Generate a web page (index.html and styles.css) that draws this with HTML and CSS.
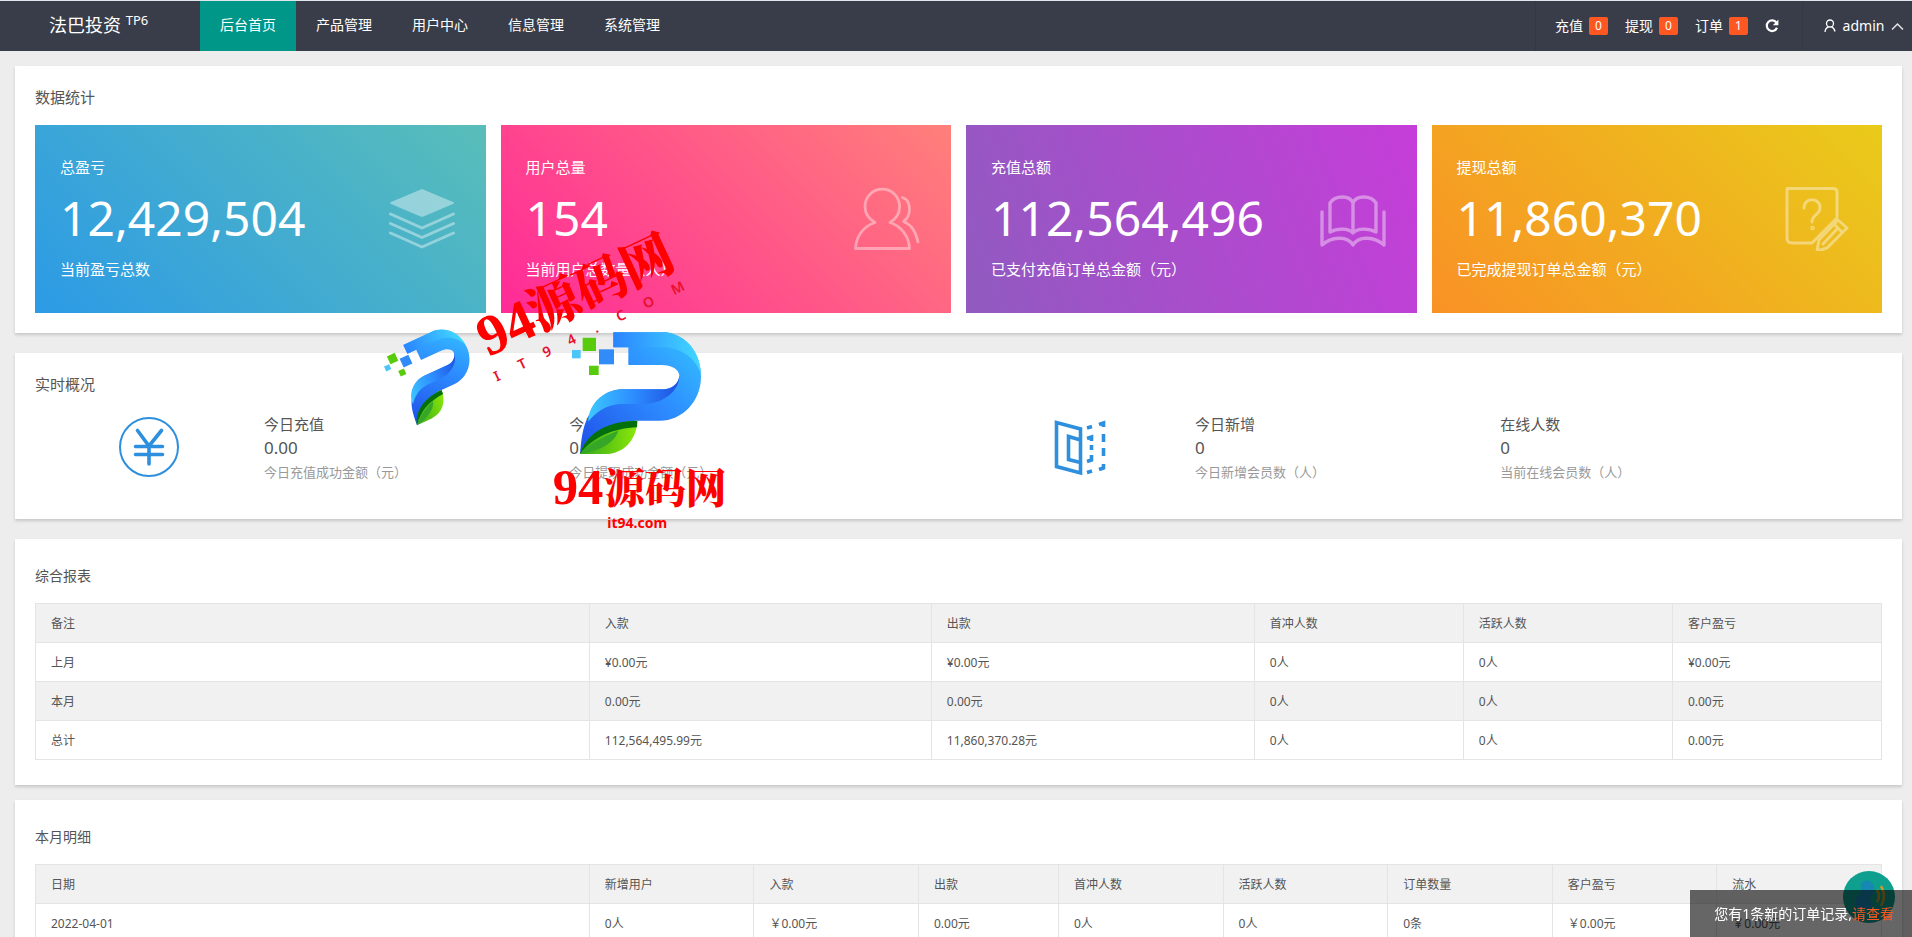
FILE: index.html
```html
<!DOCTYPE html>
<html lang="zh-CN">
<head>
<meta charset="utf-8">
<title>法巴投资 TP6</title>
<link rel="stylesheet" href="styles.css">
</head>
<body>
<header class="topbar">
  <a class="brand" href="#">法巴投资 <sup>TP6</sup></a>
  <nav class="nav">
    <a class="nav-item active" href="#">后台首页</a>
    <a class="nav-item" href="#">产品管理</a>
    <a class="nav-item" href="#">用户中心</a>
    <a class="nav-item" href="#">信息管理</a>
    <a class="nav-item" href="#">系统管理</a>
  </nav>
  <div class="tools">
    <a class="tool" href="#">充值 <span class="badge">0</span></a>
    <a class="tool" href="#">提现 <span class="badge">0</span></a>
    <a class="tool" href="#">订单 <span class="badge">1</span></a>
    <button class="refresh" aria-label="刷新"><svg width="14" height="14" viewBox="0 0 14 14"><path d="M11.4 3.6A5.3 5.3 0 1 0 12 8.8" fill="none" stroke="#fff" stroke-width="2.2"/><path d="M13.4.6V6.200H7.800z" fill="#fff"/></svg></button>
    <button class="user"><svg width="12" height="14" viewBox="0 0 12 14" fill="none" stroke="#fff" stroke-width="1.300"><circle cx="6" cy="4.500" r="3.500"/><path d="M4.500 7.800C2.500 8.500 1.200 10 1 13M7.500 7.800C9.300 8.500 10.500 10 11 12.500"/></svg><span>admin</span><svg width="13" height="9" viewBox="0 0 13 9"><path d="M1 7.500L6.500 2L12 7.500" fill="none" stroke="#e4e5e7" stroke-width="1.500"/></svg></button>
  </div>
</header>

<main class="page">
  <section class="card card-stats">
    <h2 class="title">数据统计</h2>
    <div class="stats">
      <div class="stat blue">
        <div class="stat-text"><p>总盈亏</p><strong>12,429,504</strong><p>当前盈亏总数</p></div>
        <svg class="stat-icon" viewBox="0 0 66 66"><path d="M33 4L64 17Q66 18 64 19L34.500 31.500Q33 32 31.500 31.500L2 19Q0 18 2 17Z" fill="#fff"/><path d="M1.500 29L33 43L64.500 29M1.500 38.500L33 52.500L64.500 38.500M1.500 48L33 62L64.500 48" fill="none" stroke="#fff" stroke-width="3" stroke-linecap="round" stroke-linejoin="round"/></svg>
      </div>
      <div class="stat pink">
        <div class="stat-text"><p>用户总量</p><strong>154</strong><p>当前用户总数量（人）</p></div>
        <svg class="stat-icon" viewBox="0 0 66 66" fill="none" stroke="#fff" stroke-width="2.800" stroke-linecap="round" stroke-linejoin="round"><path d="M21 37.500C15 34 11 28 11 21.500A17.300 17.300 0 0 1 45.600 21.500C45.600 28 42 34 36 37.500C47 41 55 51 55.500 63.500H1.500C2 51 10 41 21 37.500Z"/><path d="M48.500 12.500C53 14 55.500 18 55.500 24C55.500 29 53 34 49.500 36.500C57 39.500 62 47 64 57"/></svg>
      </div>
      <div class="stat purple">
        <div class="stat-text"><p>充值总额</p><strong>112,564,496</strong><p>已支付充值订单总金额（元）</p></div>
        <svg class="stat-icon" viewBox="0 0 66 66" fill="none" stroke="#fff" stroke-width="3.400" stroke-linecap="round" stroke-linejoin="round"><path d="M33 18C30 10 15 10 10 18V47C17 43 29 43 33 48C37 43 49 43 56 47V18C51 10 36 10 33 18V48"/><path d="M2 27V60C11 52 27 50 33 60C39 50 55 52 64 60V27"/></svg>
      </div>
      <div class="stat orange">
        <div class="stat-text"><p>提现总额</p><strong>11,860,370</strong><p>已完成提现订单总金额（元）</p></div>
        <svg class="stat-icon" viewBox="0 0 66 66" fill="none" stroke="#fff" stroke-width="3" stroke-linecap="round" stroke-linejoin="round"><path d="M52 31V7Q52 3.500 48 3.500H2V53Q2 58 7 58H27L52 33"/><path d="M19 23C19 11 36 13 35 23C35 30 27 29 27 37"/><circle cx="27.500" cy="43" r=".8"/><path d="M53 35L62 43L42 63L32 66L34 55ZM49 39L57 47M53 43L38 59"/></svg>
      </div>
    </div>
  </section>

  <section class="card card-live">
    <h2 class="title">实时概况</h2>
    <div class="live">
      <div class="live-group">
        <svg class="live-icon" viewBox="0 0 60 60" fill="none" stroke="#2d8fdd"><circle cx="30" cy="30" r="29" stroke-width="2"/><path d="M18.500 13.500L30 29L42.500 13.500M16.500 29.500H43.500M16.500 37.500H43.500M30 29V47" stroke-width="3.600" stroke-linecap="round"/></svg>
        <div class="live-item"><h3>今日充值</h3><b>0.00</b><p>今日充值成功金额（元）</p></div>
        <div class="live-item"><h3>今日提现</h3><b>0.00</b><p>今日提现成功金额（元）</p></div>
      </div>
      <div class="live-group">
        <svg class="live-icon" viewBox="0 0 60 60" fill="none" stroke="#2d8fdd" stroke-width="3.600"><path d="M6.500 5.500V49.500L30.500 56V12ZM30.500 23L18.500 19.500V42.500L30.500 45.500"/><path d="M37 11L42 9.500M49 7.500L53.500 6V10M53.500 17V25M53.500 31V39M53.500 47V51L49 52.500M42 54L37 55.500M37 21.500L41.500 20V24M41.500 28V33M41.500 38V43L37 44.500"/></svg>
        <div class="live-item"><h3>今日新增</h3><b>0</b><p>今日新增会员数（人）</p></div>
        <div class="live-item"><h3>在线人数</h3><b>0</b><p>当前在线会员数（人）</p></div>
      </div>
    </div>
  </section>

  <section class="card card-table">
    <h2 class="title small">综合报表</h2>
    <table class="grid">
      <colgroup><col class="w-first"><col class="w-in"><col class="w-out"><col><col><col></colgroup>
      <thead><tr><th>备注</th><th>入款</th><th>出款</th><th>首冲人数</th><th>活跃人数</th><th>客户盈亏</th></tr></thead>
      <tbody>
        <tr><td>上月</td><td>¥0.00元</td><td>¥0.00元</td><td>0人</td><td>0人</td><td>¥0.00元</td></tr>
        <tr><td>本月</td><td>0.00元</td><td>0.00元</td><td>0人</td><td>0人</td><td>0.00元</td></tr>
        <tr><td>总计</td><td>112,564,495.99元</td><td>11,860,370.28元</td><td>0人</td><td>0人</td><td>0.00元</td></tr>
      </tbody>
    </table>
  </section>

  <section class="card card-table">
    <h2 class="title small">本月明细</h2>
    <table class="grid">
      <colgroup><col class="w-first"><col><col><col class="w-narrow"><col><col><col><col><col></colgroup>
      <thead><tr><th>日期</th><th>新增用户</th><th>入款</th><th>出款</th><th>首冲人数</th><th>活跃人数</th><th>订单数量</th><th>客户盈亏</th><th>流水</th></tr></thead>
      <tbody>
        <tr><td>2022-04-01</td><td>0人</td><td>￥0.00元</td><td>0.00元</td><td>0人</td><td>0人</td><td>0条</td><td>￥0.00元</td><td>￥0.00元</td></tr>
      </tbody>
    </table>
  </section>
</main>

<svg class="watermark" viewBox="0 0 1200 1050" aria-hidden="true">
  <defs>
    <linearGradient id="top" x1="0" x2="1"><stop offset="0" stop-color="#2a84ff"/><stop offset="1" stop-color="#42d8ff"/></linearGradient>
    <linearGradient id="body" x1="1" y1="0" x2="0" y2="1"><stop offset="0" stop-color="#35c4ff"/><stop offset=".45" stop-color="#2d8cff"/><stop offset="1" stop-color="#1f4fe8"/></linearGradient>
    <linearGradient id="fold" x1="0" x2="1"><stop offset="0" stop-color="#3cc8ff"/><stop offset=".5" stop-color="#2d8cff"/><stop offset="1" stop-color="#1e50e0"/></linearGradient>
    <linearGradient id="leaf" x1="0" x2="1"><stop offset="0" stop-color="#35a81c"/><stop offset="1" stop-color="#8be808"/></linearGradient>
    <g id="mark">
      <path d="M760 397H920C985 410 1023 465 1023 530C1023 605 965 662 900 662H830C760 668 700 700 660 762C665 700 672 670 690 640C705 600 740 568 790 568H910C935 568 958 550 958 525C955 508 935 495 905 495H805V442H760Z" fill="url(#body)"/>
      <path d="M760 397H920C980 407 1020 455 1023 520C1000 465 955 442 905 442H760Z" fill="url(#top)"/>
      <path d="M685 665C685 610 735 568 785 568H910C935 568 958 550 958 525C960 575 905 612 850 612H780C735 615 705 640 685 665Z" fill="url(#fold)"/>
      <path d="M660 762C680 700 750 665 832 662C830 720 790 762 735 762Z" fill="url(#leaf)"/>
      <path d="M660 762C700 722 750 700 775 692C765 725 725 752 660 762Z" fill="#35a628"/>
      <path d="M660 762C680 695 750 662 832 662L831 682C760 685 700 710 660 762Z" fill="#04700c"/>
      <path d="M668 413h40v40h-40zM687 497h29v28h-29z" fill="#58cc0c"/>
      <path d="M636 450h26v25h-26z" fill="#4cc6f6"/>
      <path d="M717 448h45v45h-45z" fill="#318cf8"/>
    </g>
  </defs>
  <use href="#mark"/>
  <use href="#mark" transform="translate(130 435) rotate(-25) scale(.645) translate(-760 -397)"/>
  <g transform="translate(384 472) rotate(-25)"><text class="num-large" x="0" y="0">94</text><text class="han-large" x="170" y="-6">源码网</text></g>
  <g class="wm-track" transform="translate(410 545) rotate(-26)"><text x="0 80 163 245 332 408 498 592" y="0">IT94.COM</text></g>
  <text class="num-mid" x="578" y="911">94</text><text class="han-mid" x="733" y="908">源码网</text>
  <text class="site" x="742" y="983">it94.com</text>
</svg>

<button class="sound" aria-label="声音提醒"><svg width="52" height="52" viewBox="0 0 52 52"><circle cx="26" cy="26" r="26" fill="#0f9f8f"/><path d="M18 12Q26 6 31 15Q32 22 27 26L29 38H12Q10 26 18 23Z" fill="#1787b4"/><path d="M34 19Q38 25 34 31M38 15Q44 25 38 35" fill="none" stroke="#c99a22" stroke-width="2.500"/></svg></button>
<div class="toast" role="status">您有1条新的订单记录,<a href="#">请查看</a></div>
</body>
</html>
```

FILE: styles.css
```css
* { box-sizing: border-box; }
body {
  margin: 0;
  height: 100vh;
  overflow: hidden;
  background: #ededed;
  color: #555;
  font: 14px/24px "Noto Sans", "Noto Sans CJK SC", sans-serif;
}
h2, h3, p { margin: 0; font-weight: 400; }
a { color: inherit; text-decoration: none; }
button { border: 0; padding: 0; background: none; color: inherit; font: inherit; }

.topbar {
  display: flex;
  height: 51px;
  border-top: 1px solid #dfe6ec;
  background: #393d49;
  color: #fff;
}
.brand { width: 200px; padding-left: 49px; font-size: 18px; line-height: 49px; }
.brand sup { font-size: 13px; line-height: 0; }
.nav { display: flex; }
.nav-item { padding: 0 20px; line-height: 48px; }
.nav-item.active { background: #009688; }
.tools { display: flex; margin-left: auto; border-left: 1px solid #343843; line-height: 48px; }
.tool {
  display: flex;
  align-items: center;
  gap: 6px;
  width: 70px;
  padding-left: 19px;
  white-space: nowrap;
}
.badge {
  flex: none;
  width: 19px;
  height: 18px;
  border-radius: 2px;
  background: #ff5722;
  font-size: 12px;
  line-height: 18px;
  text-align: center;
}
.refresh, .user { display: flex; align-items: center; justify-content: center; }
.refresh { width: 56px; padding-right: 4px; }
.user { width: 110px; gap: 7px; padding-left: 13px; border-left: 1px solid #343843; }

.page { padding: 15px 10px 0 15px; }
.card { padding: 20px; background: #fff; box-shadow: 0 2px 3px rgba(0, 0, 0, .16); }
.title { font-size: 15px; line-height: 22px; }
.title.small { font-size: 14px; line-height: 24px; }

.card-stats { margin-bottom: 20px; }
.stats { display: grid; grid-template-columns: repeat(4, 1fr); gap: 15px; margin-top: 17px; }
.stat {
  display: flex;
  align-items: center;
  justify-content: space-between;
  height: 188px;
  padding: 0 31px 2px 25px;
  color: #fff;
}
.stat p { font-size: 15px; line-height: 24px; }
.stat strong { display: block; font-size: 48px; font-weight: 400; line-height: 78px; }
.stat-icon { flex: none; width: 66px; height: 66px; opacity: .4; }
.blue { background: linear-gradient(45deg, #2c9ae6, #59beb9); }
.pink { background: linear-gradient(45deg, #ff2a98, #ff807a); }
.purple { background: linear-gradient(70deg, #905bc0, #c63dd9); }
.orange { background: linear-gradient(45deg, #f99125, #e9cb1a); }

.card-live { margin-bottom: 20px; padding-bottom: 34px; }
.live { display: grid; grid-template-columns: 1fr 1fr; gap: 15px; margin-top: 17px; }
.live-group { display: grid; grid-template-columns: 3fr 4fr 5fr; align-items: start; }
.live-icon { width: 60px; height: 60px; margin: 5px 1px 0 0; justify-self: center; }
.live-item h3 { font-size: 15px; line-height: 24px; }
.live-item b { display: block; font-size: 17px; font-weight: 400; line-height: 24px; }
.live-item p { color: #999; font-size: 13px; line-height: 25px; }

.card-table { margin-bottom: 15px; padding: 25px 20px; }
.grid { width: 100%; margin-top: 15px; border-collapse: collapse; table-layout: fixed; }
.grid th, .grid td {
  height: 39px;
  padding: 2px 15px 0;
  border: 1px solid #e4e4e4;
  font-size: 12px;
  font-weight: 400;
  line-height: 24px;
  text-align: left;
}
.grid thead, .grid tbody tr:nth-child(even) { background: #f1f1f1; }
.w-first { width: 30%; }
.w-in { width: 342px; }
.w-out { width: 323px; }
.w-narrow { width: 140px; }

.watermark { position: absolute; left: 360px; top: 200px; width: 400px; height: 350px; pointer-events: none; fill: #f00; }
.num-large, .num-mid { font-family: "Liberation Serif", serif; font-weight: 700; }
.han-large, .han-mid { font-family: "Noto Serif CJK SC", "Noto Sans CJK SC", sans-serif; font-weight: 900; }
.num-large { font-size: 172px; }
.han-large { font-size: 154px; }
.num-mid { font-size: 152px; }
.han-mid { font-size: 122px; }
.wm-track { font-size: 42px; font-weight: 600; fill: #e8102c; }
.site { font-size: 42px; font-weight: 700; }

.sound { position: fixed; right: 17px; bottom: 14px; width: 52px; height: 52px; }
.sound svg { display: block; }
.toast {
  position: fixed;
  right: 0;
  bottom: 0;
  padding: 12px 18px 11px 24px;
  background: rgba(0, 0, 0, .6);
  color: #fff;
  white-space: nowrap;
}
.toast a { color: #ff5722; }
```
